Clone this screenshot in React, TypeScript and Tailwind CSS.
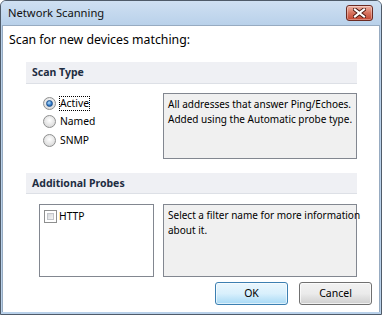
import React from 'react'

const RADIOS = ['Active', 'Named', 'SNMP']

function CloseButton() {
  return (
    <div className="w-[27px] h-[16px] rounded-[3px] border border-[#6b2a22] bg-linear-to-b from-[#eeb2a3] via-[#d6725e] to-[#c2432f] shadow-[inset_0_0_0_1px_rgba(255,255,255,0.35)] flex items-center justify-center">
      <svg width="13" height="10" viewBox="0 0 13 10">
        <path d="M2 1.5 L11 8.5 M11 1.5 L2 8.5" stroke="#4a1710" strokeWidth="4" strokeLinecap="square" />
        <path d="M2 1.5 L11 8.5 M11 1.5 L2 8.5" stroke="#ffffff" strokeWidth="2.2" strokeLinecap="square" />
      </svg>
    </div>
  )
}

function Radio({ checked }: { checked: boolean }) {
  return (
    <div className="w-[13px] h-[13px] rounded-full border border-[#8e8f8f] bg-[radial-gradient(circle_at_50%_40%,#ffffff,#d9d9d9_80%)] flex items-center justify-center shrink-0">
      {checked && (
        <div className="w-[7px] h-[7px] rounded-full border border-[#1b4f8c] bg-[radial-gradient(circle_at_40%_35%,#b4e0fd,#2b74c4_60%,#15508f)]" />
      )}
    </div>
  )
}

function Band({ title, h }: { title: string; h: string }) {
  return (
    <div className={`ml-[23px] w-[331px] ${h} bg-[#eff0f4] border-b border-[#dde0e6] flex items-center pl-[6px]`}>
      <span className="text-[10.5px] font-bold text-[#1e2d42] leading-none">{title}</span>
    </div>
  )
}

export default function App() {
  return (
    <div className="w-[382px] h-[315px] flex flex-col border border-[#4f5b69] rounded-t-[6px] bg-[#b9d1ea] font-['Noto_Sans',sans-serif] text-black overflow-hidden">
      <div className="h-[24px] flex items-center justify-between pl-[7px] pr-[8px] bg-linear-to-b from-[#cfe0f2] to-[#b9d1ea]">
        <span className="text-[11.2px] leading-none text-[#111]">Network Scanning</span>
        <CloseButton />
      </div>

      <div className="flex-1 mx-px mb-[2px] bg-white border border-b-0 border-[#97abc1] flex flex-col">
        <div className="ml-[6px] mt-[6px] h-[16px] text-[12.3px] leading-[16px]">Scan for new devices matching:</div>

        <div className="mt-[14px]">
          <Band title="Scan Type" h="h-[22px]" />
        </div>

        <div className="mt-[9px] ml-[23px] flex">
          <div className="w-[137px] pl-[17px] pt-px flex flex-col">
            {RADIOS.map((r, i) => (
              <div key={r} className="h-[18.5px] flex items-center gap-[3px]">
                <Radio checked={i === 0} />
                <span
                  className={[
                    'text-[10.3px] leading-[13px] border',
                    i === 0 ? 'border-dotted border-black' : 'border-transparent',
                  ].join(' ')}
                >
                  {r}
                </span>
              </div>
            ))}
          </div>
          <div className="w-[194px] h-[66px] border border-[#828790] bg-[#f0f0f0] pl-[4px] pt-[3px] text-[10px] leading-[15px] whitespace-nowrap">
            All addresses that answer Ping/Echoes.
            <br />
            Added using the Automatic probe type.
          </div>
        </div>

        <div className="mt-[14px]">
          <Band title="Additional Probes" h="h-[21px]" />
        </div>

        <div className="mt-[10px] ml-[36px] flex gap-[9px]">
          <div className="w-[115px] h-[73px] border border-[#828790] bg-white pl-[4px] pt-[5px]">
            <div className="flex items-center gap-[2px]">
              <div className="w-[13px] h-[13px] border border-[#8e8f8f] bg-white p-[2px]">
                <div className="w-full h-full border border-[#c2c5ca] bg-linear-to-br from-[#d5d7da] to-[#f7f7f7]" />
              </div>
              <span className="text-[10.3px] leading-[13px]">HTTP</span>
            </div>
          </div>
          <div className="w-[194px] h-[73px] border border-[#828790] bg-[#f0f0f0] pl-[4px] pt-[3px] text-[10px] leading-[15px] whitespace-nowrap">
            Select a filter name for more information
            <br />
            about it.
          </div>
        </div>

        <div className="mt-[5px] flex justify-end gap-[11px] pr-[7px]">
          <button className="w-[73px] h-[23px] rounded-[3px] border border-[#3c7fb1] bg-linear-to-b from-[#eaf6fd] via-[#d9f0fc] to-[#a7d9f5] shadow-[inset_0_0_0_1px_rgba(255,255,255,0.6)] text-[10.5px]">
            OK
          </button>
          <button className="w-[73px] h-[23px] rounded-[3px] border border-[#707070] bg-linear-to-b from-[#f2f2f2] via-[#ebebeb] to-[#cfcfcf] shadow-[inset_0_0_0_1px_rgba(255,255,255,0.7)] text-[10.5px]">
            Cancel
          </button>
        </div>
      </div>
    </div>
  )
}
